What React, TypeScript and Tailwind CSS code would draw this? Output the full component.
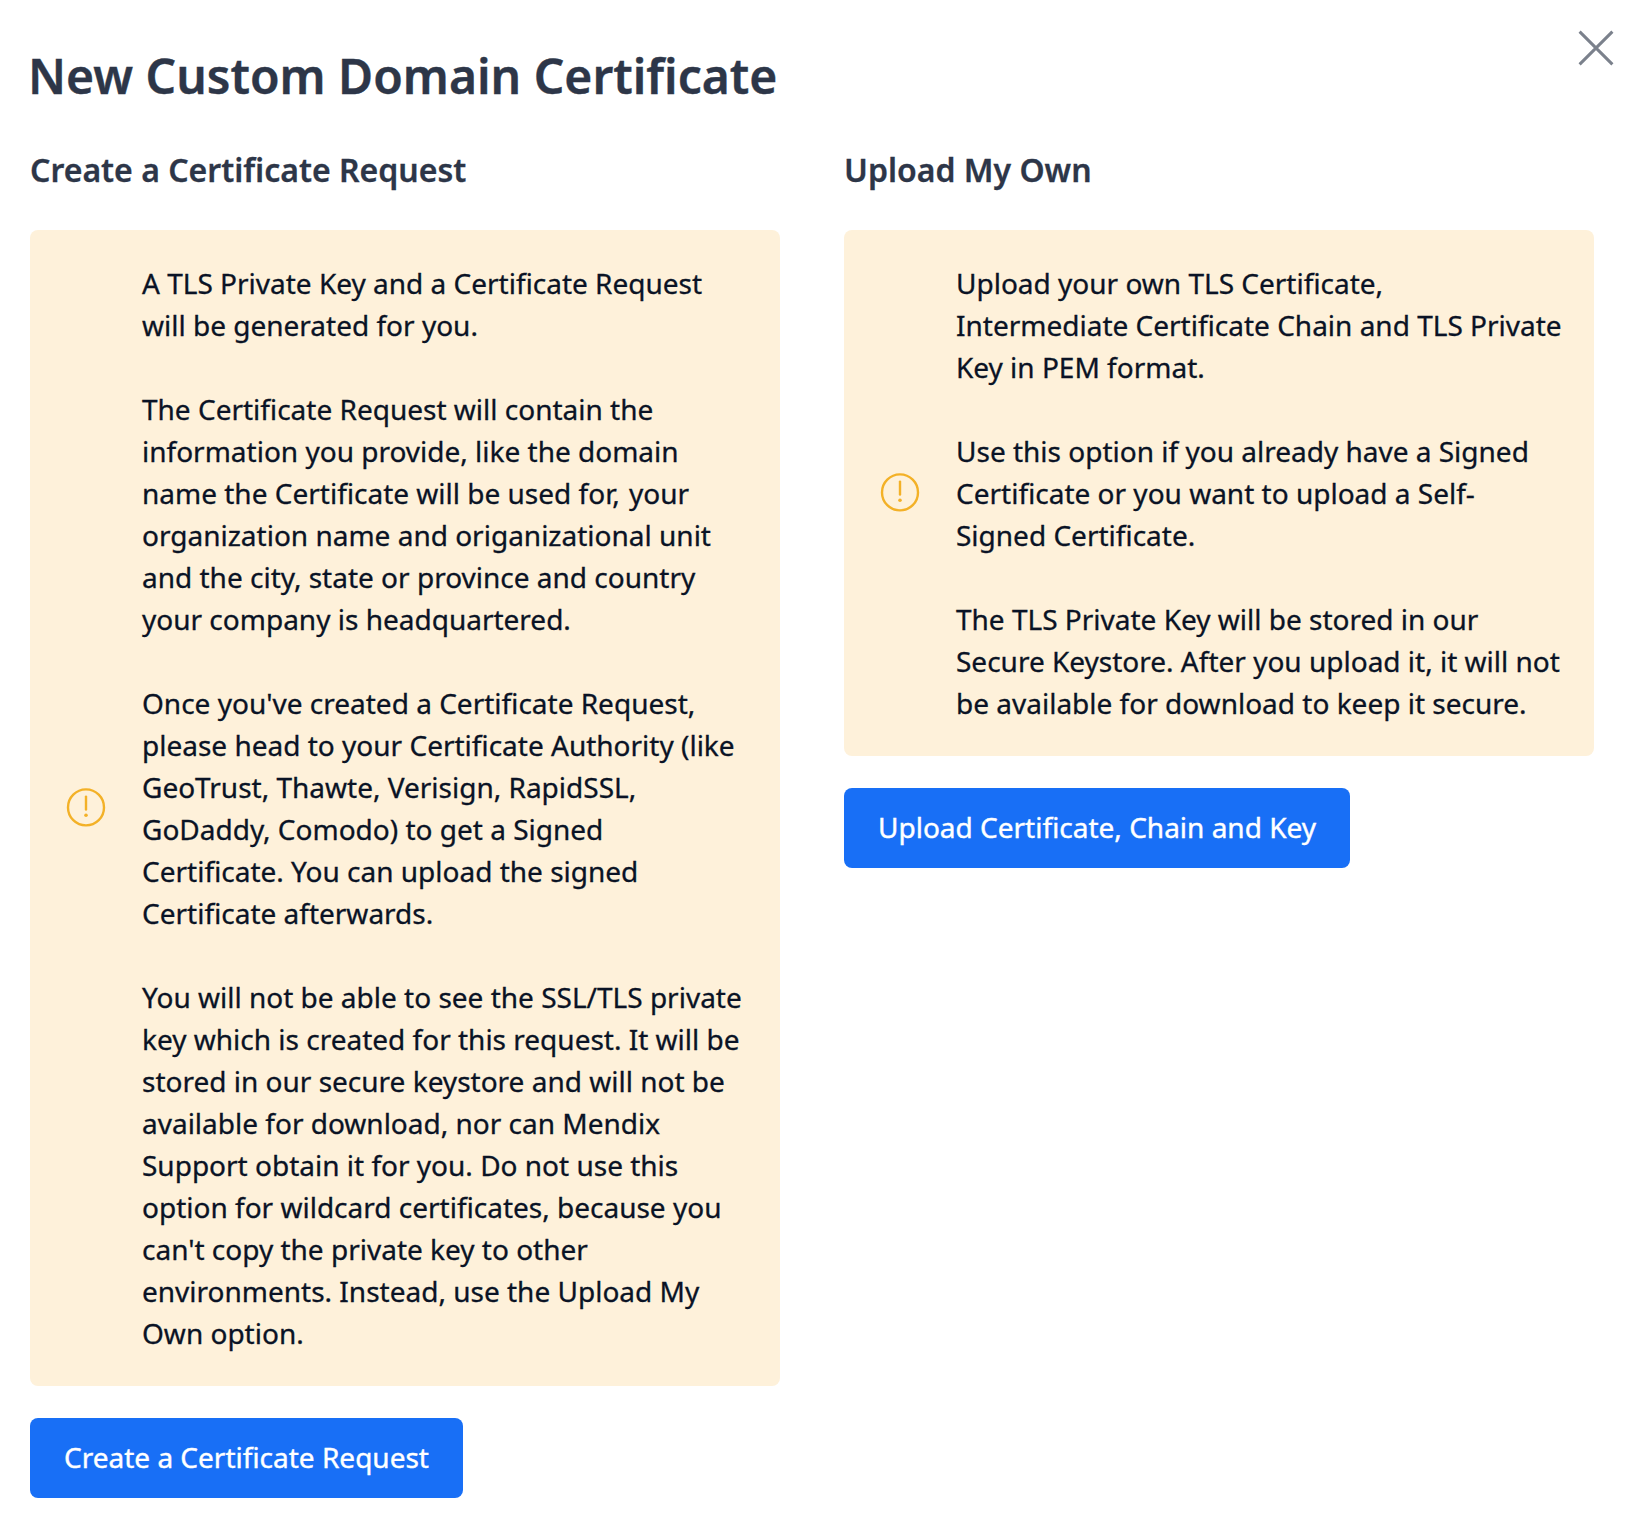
import type { ReactNode } from "react";

function WarningIcon() {
  return (
    <svg className="block h-10 w-10" viewBox="0 0 40 40" fill="none" stroke="#f3b127" strokeWidth="2.4">
      <circle cx="20" cy="19.4" r="18" />
      <path d="M20 8.6v12.9" strokeLinecap="round" />
      <circle cx="20" cy="27.3" r="1.8" fill="#f3b127" stroke="none" />
    </svg>
  );
}

function Panel({ title, paragraphs, action }: { title: string; paragraphs: ReactNode[]; action: string }) {
  return (
    <section className="w-[750px]">
      <h2 className="h-[44px] text-[32px] leading-[44px] font-semibold whitespace-nowrap text-[#2d3648] [-webkit-text-stroke:0.3px_#2d3648]">
        {title}
      </h2>
      <div className="mt-[38px] flex items-center rounded-[8px] bg-[#fef1da] py-[32px] pl-[36px]">
        <WarningIcon />
        <div className="ml-[36px] flex flex-col gap-[42px] text-[28px] leading-[42px] whitespace-nowrap text-[#0a1325] [-webkit-text-stroke:0.3px_#0a1325]">
          {paragraphs.map((p, i) => (
            <p key={i}>{p}</p>
          ))}
        </div>
      </div>
      <button className="mt-[32px] h-20 rounded-[8px] bg-[#186ff6] px-[34px] pb-[2px] text-[28px] leading-[42px] whitespace-nowrap text-white [-webkit-text-stroke:0.4px_#fff]">
        {action}
      </button>
    </section>
  );
}

const lines = (...rows: ReactNode[]) =>
  rows.map((row, i) => (
    <span key={i} className="block">
      {row}
    </span>
  ));

export default function App() {
  return (
    <main className="relative h-[1528px] w-[1644px] overflow-hidden bg-white pt-[40px] pl-[30px] font-['Noto_Sans',sans-serif]">
      <button aria-label="Close" className="absolute top-[28px] right-[28px]">
        <svg className="block h-10 w-10" viewBox="0 0 40 40" fill="none" stroke="#7b818c" strokeWidth="3">
          <path d="M3.6 3.6l32.8 32.8M36.4 3.6L3.6 36.4" />
        </svg>
      </button>
      <h1 className="-ml-[2px] h-[72px] text-[48px] leading-[72px] font-semibold text-[#2d3648] [-webkit-text-stroke:0.4px_#2d3648]">
        New Custom Domain Certificate
      </h1>
      <div className="mt-[36px] flex gap-[64px]">
        <Panel
          title="Create a Certificate Request"
          action="Create a Certificate Request"
          paragraphs={[
            lines("A TLS Private Key and a Certificate Request", "will be generated for you."),
            lines(
              "The Certificate Request will contain the",
              "information you provide, like the domain",
              <>
                name the Certificate will be used for, <span className="ml-[2px]">your</span>
              </>,
              "organization name and origanizational unit",
              "and the city, state or province and country",
              "your company is headquartered.",
            ),
            lines(
              "Once you've created a Certificate Request,",
              "please head to your Certificate Authority (like",
              "GeoTrust, Thawte, Verisign, RapidSSL,",
              "GoDaddy, Comodo) to get a Signed",
              "Certificate. You can upload the signed",
              "Certificate afterwards.",
            ),
            lines(
              "You will not be able to see the SSL/TLS private",
              "key which is created for this request. It will be",
              "stored in our secure keystore and will not be",
              "available for download, nor can Mendix",
              "Support obtain it for you. Do not use this",
              "option for wildcard certificates, because you",
              "can't copy the private key to other",
              "environments. Instead, use the Upload My",
              "Own option.",
            ),
          ]}
        />
        <Panel
          title="Upload My Own"
          action="Upload Certificate, Chain and Key"
          paragraphs={[
            lines(
              "Upload your own TLS Certificate,",
              "Intermediate Certificate Chain and TLS Private",
              "Key in PEM format.",
            ),
            lines(
              "Use this option if you already have a Signed",
              "Certificate or you want to upload a Self-",
              "Signed Certificate.",
            ),
            lines(
              "The TLS Private Key will be stored in our",
              "Secure Keystore. After you upload it, it will not",
              "be available for download to keep it secure.",
            ),
          ]}
        />
      </div>
    </main>
  );
}
